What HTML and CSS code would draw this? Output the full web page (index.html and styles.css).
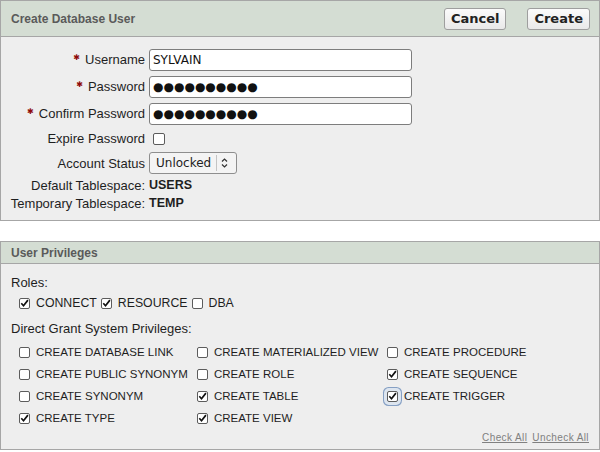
FILE: index.html
```html
<!DOCTYPE html>
<html lang="en">
<head>
    <meta charset="UTF-8">
    <meta name="viewport" content="width=device-width, initial-scale=1.0">
    <title>Create Database User</title>
    <link rel="stylesheet" href="styles.css">
</head>
<body>
    <div class="region">
        <div class="region-header">
            <h2>Create Database User</h2>
            <div class="buttons">
                <button type="button">Cancel</button>
                <button type="button">Create</button>
            </div>
        </div>
        <div class="region-body user-form">
            <div class="row field">
                <label for="username"><span class="star">✱</span>Username</label>
                <input type="text" id="username" class="text" value="SYLVAIN">
            </div>
            <div class="row field">
                <label for="password"><span class="star">✱</span>Password</label>
                <input type="text" id="password" class="text masked" value="●●●●●●●●●●" readonly>
            </div>
            <div class="row field">
                <label for="confirm"><span class="star">✱</span>Confirm Password</label>
                <input type="text" id="confirm" class="text masked" value="●●●●●●●●●●" readonly>
            </div>
            <div class="row check-row">
                <label for="expire">Expire Password</label>
                <input type="checkbox" id="expire" class="expire">
            </div>
            <div class="row select-row">
                <label for="status">Account Status</label>
                <select id="status">
                    <option>Unlocked</option>
                    <option>Locked</option>
                </select>
            </div>
            <div class="row info">
                <span class="label">Default Tablespace:</span>
                <strong>USERS</strong>
            </div>
            <div class="row info">
                <span class="label">Temporary Tablespace:</span>
                <strong>TEMP</strong>
            </div>
        </div>
    </div>

    <div class="region privileges">
        <div class="region-header small">
            <h2>User Privileges</h2>
        </div>
        <div class="region-body priv-body">
            <div class="caption">Roles:</div>
            <div class="roles">
                <label class="check"><input type="checkbox" checked>CONNECT</label>
                <label class="check"><input type="checkbox" checked>RESOURCE</label>
                <label class="check"><input type="checkbox">DBA</label>
            </div>
            <div class="caption grants">Direct Grant System Privileges:</div>
            <div class="priv-grid">
                <label class="check"><input type="checkbox">CREATE DATABASE LINK</label>
                <label class="check"><input type="checkbox">CREATE MATERIALIZED VIEW</label>
                <label class="check"><input type="checkbox">CREATE PROCEDURE</label>
                <label class="check"><input type="checkbox">CREATE PUBLIC SYNONYM</label>
                <label class="check"><input type="checkbox">CREATE ROLE</label>
                <label class="check"><input type="checkbox" checked>CREATE SEQUENCE</label>
                <label class="check"><input type="checkbox">CREATE SYNONYM</label>
                <label class="check"><input type="checkbox" checked>CREATE TABLE</label>
                <label class="check"><input type="checkbox" class="focused" checked>CREATE TRIGGER</label>
                <label class="check"><input type="checkbox" checked>CREATE TYPE</label>
                <label class="check"><input type="checkbox" checked>CREATE VIEW</label>
            </div>
            <div class="links">
                <a href="#">Check All</a>
                <a href="#">Uncheck All</a>
            </div>
        </div>
    </div>
</body>
</html>
```

FILE: styles.css
```css
body {
    margin: 0;
    padding: 0;
    background: #fff;
    font-family: "Liberation Sans", Arial, sans-serif;
    font-size: 13px;
    color: #1e1e1e;
}
.region {
    border: 1px solid #a6a6a6;
    background: #eeeeee;
}
.privileges {
    margin-top: 20px;
}
.region-header {
    display: flex;
    align-items: center;
    justify-content: space-between;
    height: 35px;
    padding: 0 9px 0 10px;
    background: #d4ddd3;
    border-bottom: 1px solid #a6a6a6;
}
.region-header.small {
    height: 21px;
}
.region-header h2 {
    margin: 0;
    font-size: 12px;
    font-weight: bold;
    color: #5a5a5a;
}
.buttons {
    display: flex;
    gap: 21px;
}
button {
    height: 22px;
    padding: 0 6px;
    font-family: "DejaVu Sans", sans-serif;
    font-size: 13px;
    font-weight: bold;
    color: #222;
    background: linear-gradient(#fbfbfb, #e9e9e9);
    border: 1px solid #9e9e9e;
    border-radius: 3px;
}
.user-form {
    padding: 9px 0 8px 0;
}
.row {
    display: flex;
    align-items: center;
}
.row label,
.row .label {
    width: 144px;
    margin-right: 4px;
    text-align: right;
    white-space: nowrap;
}
.field {
    height: 27px;
}
.check-row {
    height: 23px;
}
.select-row {
    height: 26px;
}
.info {
    height: 18px;
}
.info strong {
    font-size: 12.5px;
}
.star {
    color: #8e0b0b;
    font-family: "DejaVu Sans", sans-serif;
    font-size: 8px;
    position: relative;
    top: -4px;
    margin-right: 5px;
}
.text {
    box-sizing: border-box;
    width: 263px;
    height: 22px;
    margin: 0;
    padding: 0 3px;
    font-family: "DejaVu Sans", sans-serif;
    font-size: 12px;
    color: #111;
    background: #fff;
    border: 1px solid #7d7d7d;
    border-radius: 3px;
    outline: none;
}
.masked {
    font-size: 12px;
    letter-spacing: 0;
}
select {
    -webkit-appearance: none;
    appearance: none;
    box-sizing: border-box;
    width: 88px;
    height: 22px;
    margin: 0;
    padding: 0 0 0 6px;
    font-family: "DejaVu Sans", sans-serif;
    font-size: 12px;
    color: #222;
    border: 1px solid #8e8e8e;
    border-radius: 3px;
    background: #f4f4f4 url("data:image/svg+xml,%3Csvg xmlns='http://www.w3.org/2000/svg' width='20' height='20'%3E%3Cpath d='M0.5 2v16' stroke='%23c4c4c4'/%3E%3Cpath d='M6 8.5l2.5-2.5 2.5 2.5M6 11.5l2.5 2.5 2.5-2.5' fill='none' stroke='%23333' stroke-width='1.2'/%3E%3C/svg%3E") no-repeat right 0 center;
}
input[type=checkbox] {
    -webkit-appearance: none;
    appearance: none;
    box-sizing: border-box;
    width: 11px;
    height: 11px;
    margin: 0 6px 0 0;
    flex: none;
    background: #fff;
    border: 1px solid #5c5c5c;
    border-radius: 2px;
}
input[type=checkbox]:checked {
    background: #fff url("data:image/svg+xml,%3Csvg xmlns='http://www.w3.org/2000/svg' width='9' height='9'%3E%3Cpath d='M1.3 4.3l2.2 2.4 4.4-5.6' fill='none' stroke='%23111' stroke-width='1.7'/%3E%3C/svg%3E") no-repeat center;
}
input.expire {
    width: 12px;
    height: 12px;
    margin-left: 4px;
}
input.focused {
    box-shadow: 0 0 0 3px #dde5ef, 0 0 0 4px #86a0c4;
}
.priv-body {
    padding: 10px 10px 4px 10px;
}
.caption {
    height: 18px;
    line-height: 18px;
}
.grants {
    margin-top: 8px;
    margin-bottom: 3px;
}
.check {
    display: flex;
    align-items: center;
    white-space: nowrap;
    font-size: 11.5px;
}
.roles {
    display: flex;
    gap: 4px;
    height: 18px;
    margin-top: 2px;
    padding-left: 8px;
}
.roles .check {
    font-size: 12.3px;
}
.priv-grid {
    display: grid;
    grid-template-columns: 178px 190px auto;
    grid-auto-rows: 22px;
    padding-left: 8px;
}
.links {
    display: flex;
    justify-content: flex-end;
    gap: 5px;
    height: 16px;
    align-items: center;
}
.links a {
    font-size: 10px;
    letter-spacing: 0.4px;
    color: #808080;
    text-decoration: underline;
}
```
